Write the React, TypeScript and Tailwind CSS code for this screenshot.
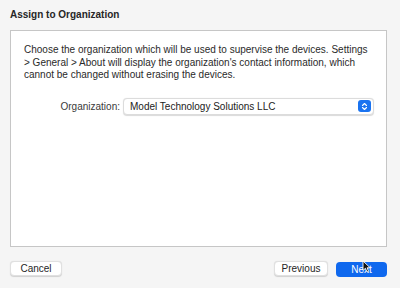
import React from "react";

export default function App() {
  return (
    <div
      className="w-[400px] h-[288px] bg-[#f5f5f5] flex flex-col px-[10px] pt-[9px] text-[#262626]"
      style={{ fontFamily: '"Liberation Sans", Arial, sans-serif' }}
    >
      <div className="text-[10px] font-bold leading-[12px] h-[21px]">Assign to Organization</div>
      <div className="w-[377px] h-[217px] bg-white border border-[#c6c6c6] flex flex-col pt-[13px] pl-[13px] pr-[10px]">
        <p className="text-[10px] leading-[12.5px] text-[#2a2a2a]">
          Choose the organization which will be used to supervise the devices. Settings
          <br />
          &gt; General &gt; About will display the organization's contact information, which
          <br />
          cannot be changed without erasing the devices.
        </p>
        <div className="flex items-center mt-[16px] ml-[34px]">
          <span className="text-[10px] text-[#3a3a3a] w-[62px] text-right">Organization:</span>
          <div className="ml-[3px] w-[251px] h-[17px] bg-white border border-[#dcdcdc] rounded-[4px] shadow-[0_0.5px_1px_rgba(0,0,0,0.15)] flex items-center pl-[6px] pr-[2px]">
            <span className="text-[10px] text-[#222] flex-1">Model Technology Solutions LLC</span>
            <div className="w-[13px] h-[12px] rounded-[3px] bg-[#1a73f0] flex items-center justify-center">
              <svg width="7" height="9" viewBox="0 0 7 9">
                <path d="M1.5 3.5 L3.5 1.5 L5.5 3.5" stroke="white" strokeWidth="1.1" fill="none" strokeLinecap="round" strokeLinejoin="round" />
                <path d="M1.5 5.5 L3.5 7.5 L5.5 5.5" stroke="white" strokeWidth="1.1" fill="none" strokeLinecap="round" strokeLinejoin="round" />
              </svg>
            </div>
          </div>
        </div>
      </div>
      <div className="flex items-center mt-[9px] w-[377px]">
        <button className="w-[52px] h-[15px] bg-white rounded-[4px] border border-[#e0e0e0] shadow-[0_0.5px_1px_rgba(0,0,0,0.15)] text-[10px] leading-[13px] text-[#262626]">
          Cancel
        </button>
        <div className="flex-1" />
        <button className="w-[54px] h-[15px] bg-white rounded-[4px] border border-[#e0e0e0] shadow-[0_0.5px_1px_rgba(0,0,0,0.15)] text-[10px] leading-[13px] text-[#262626]">
          Previous
        </button>
        <div className="relative ml-[8px]">
          <button className="w-[51px] h-[15px] rounded-[4px] bg-[#0f68ee] text-[10px] leading-[15px] text-white">
            Next
          </button>
          <svg className="absolute left-[26px] top-[4px]" width="9" height="13" viewBox="0 0 9 13">
            <path d="M1 1 L1 10.5 L3.4 8.3 L5 12 L6.6 11.3 L5.1 7.8 L8.2 7.8 Z" fill="#111" stroke="white" strokeWidth="0.9" strokeLinejoin="round" />
          </svg>
        </div>
      </div>
    </div>
  );
}
